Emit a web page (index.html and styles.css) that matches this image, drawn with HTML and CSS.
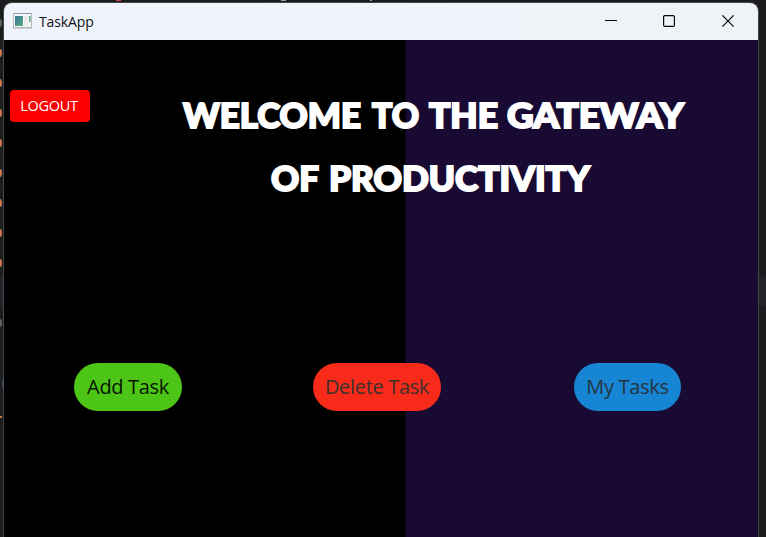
FILE: index.html
```html
<!DOCTYPE html>
<html lang="en">
<head>
<meta charset="utf-8">
<title>TaskApp</title>
<link rel="stylesheet" href="styles.css">
</head>
<body>
<svg class="backdrop" width="766" height="537" aria-hidden="true">
  <rect y="276" width="766" height="30" fill="#222329"/>
  <g fill="#c9794f">
    <ellipse cy="53" rx="2" ry="4"/><ellipse cy="83" rx="2" ry="4"/><ellipse cy="113" rx="2" ry="4"/>
    <ellipse cy="143" rx="2" ry="4"/><ellipse cy="173" rx="2" ry="4"/><ellipse cy="203" rx="2" ry="4"/>
    <ellipse cy="233" rx="2" ry="4"/><ellipse cy="263" rx="2" ry="4"/><rect y="416" width="2" height="2"/>
  </g>
  <g fill="#63625f"><ellipse cy="23" rx="2" ry="4"/><ellipse cy="323" rx="2" ry="4"/></g>
  <rect x="2" y="379" width="2" height="9" fill="#344b63"/>
  <rect x="116" width="5" height="1" fill="#d54450"/>
  <rect x="281" width="5" height="1" fill="#9aa3a5"/>
  <rect x="370" width="2" height="1" fill="#9aa3a5"/>
</svg>
<div class="window">
  <header class="titlebar">
    <svg class="app-icon" width="20" height="16" viewBox="0 0 20 16">
      <defs><linearGradient id="g" x2="1" y2="1"><stop stop-color="#3b6f9c"/><stop offset="1" stop-color="#55b37c"/></linearGradient></defs>
      <rect x=".5" y=".5" width="18" height="14" fill="#f7f8f8" stroke="#b5bac0"/>
      <path d="M0 15.5h19" stroke="#c9cdd2"/>
      <path d="M1 .5h17" stroke="#8d97a5"/>
      <rect x="2" y="3" width="8" height="10" fill="#4a8f93"/>
      <rect x="2" y="3" width="8" height="10" fill="url(#g)"/>
      <rect x="11" y="3" width="4" height="10" fill="#ececec"/>
      <rect x="16" y="3" width="1.5" height="6" fill="#5aa08f"/>
    </svg>
    <span class="app-name">TaskApp</span>
    <svg class="controls" width="130" height="14" viewBox="0 0 130 14" fill="none" stroke="#080808" stroke-width="1.2">
      <path d="M0 6.5h12" stroke-width="1"/>
      <rect x="58.6" y="1.6" width="10.8" height="10.8" rx="1.2"/>
      <path d="M117.4 1.4l11.2 11.2M128.6 1.4l-11.2 11.2"/>
    </svg>
  </header>
  <main class="content">
    <div class="top">
      <button class="logout"><span>LOGOUT</span></button>
      <h1>
        <svg class="heading" width="520" height="110">
          <text y="37.5" x="3" textLength="178" lengthAdjust="spacingAndGlyphs">WELCOME</text>
          <text y="37.5" x="192" textLength="47" lengthAdjust="spacingAndGlyphs">TO</text>
          <text y="37.5" x="249" textLength="69" lengthAdjust="spacingAndGlyphs">THE</text>
          <text y="37.5" x="327" textLength="177" lengthAdjust="spacingAndGlyphs">GATEWAY</text>
          <text y="100.5" x="91" textLength="48" lengthAdjust="spacingAndGlyphs">OF</text>
          <text y="100.5" x="149" textLength="261" lengthAdjust="spacingAndGlyphs">PRODUCTIVITY</text>
        </svg>
      </h1>
    </div>
    <nav class="actions">
      <button class="pill add"><span>Add Task</span></button>
      <button class="pill delete"><span>Delete Task</span></button>
      <button class="pill mine"><span>My Tasks</span></button>
    </nav>
  </main>
</div>
</body>
</html>
```
FILE: styles.css
```css
* { box-sizing: border-box; }
body { margin: 0; width: 766px; height: 537px; overflow: hidden; background: #1b1c1e; font-family: "Open Sans", "Noto Sans", sans-serif; }
.backdrop { position: absolute; left: 0; top: 0; }
.window { position: relative; margin: 2px 7px 0 3px; height: 545px; border: 1px solid #46474b; border-radius: 9px 9px 0 0; overflow: hidden; }
.titlebar { height: 37px; display: flex; align-items: center; padding: 0 23px 0 9px; background: linear-gradient(90deg, #eff3fb, #eff3f8); }
.app-icon { margin-top: -1px; }
.app-name { margin-left: 6px; font-size: 14px; letter-spacing: -0.1px; color: #101114; }
.controls { margin-left: auto; margin-top: -1px; }
.content { height: 497px; background: linear-gradient(90deg, #000 401px, #180a33 402px); padding: 50px 0 0 6px; }
.top { display: flex; align-items: flex-start; height: 273px; }
button { border: 0; padding: 0; font-family: inherit; white-space: nowrap; display: flex; align-items: center; justify-content: center; }
.logout { width: 80px; height: 32px; border-radius: 4px; background: #f00; color: #fff; font-size: 14.5px; letter-spacing: -0.25px; padding: 0 2px 2px 0; }
h1 { margin: 0 0 0 90px; line-height: 0; }
.heading { font: 900 35px Lato, sans-serif; fill: #fff; stroke: #fff; stroke-width: 2px; }
.actions { display: flex; padding-left: 64px; }
.pill { height: 48px; border-radius: 24px; font-size: 20px; letter-spacing: -0.33px; padding-bottom: 2px; }
.add { width: 108px; background: #4dc516; color: #071300; }
.delete { width: 128px; margin-left: 131px; background: #f82b1b; color: #3b302d; }
.mine { width: 107px; margin-left: 133px; background: #1685d3; color: #26343f; }
```
